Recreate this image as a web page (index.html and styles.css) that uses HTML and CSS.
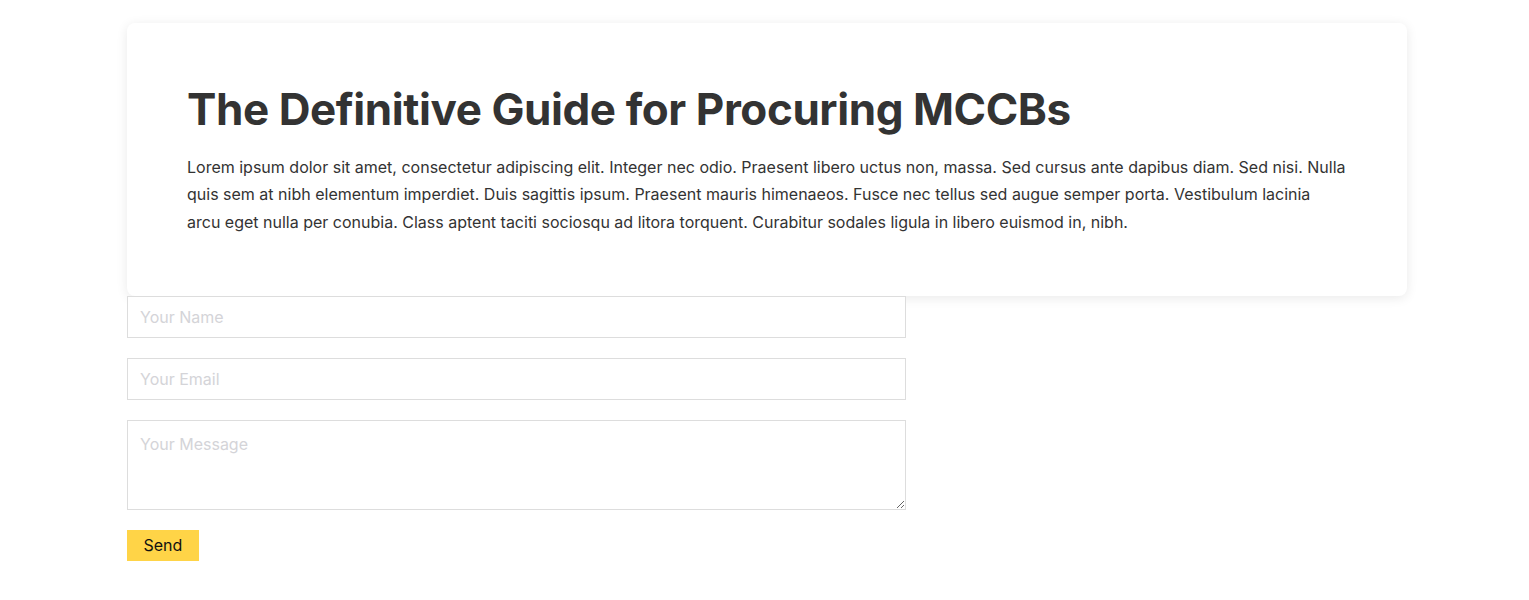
FILE: index.html
```html
<!DOCTYPE html>
<html lang="en">
<head>
<meta charset="utf-8">
<title>The Definitive Guide for Procuring MCCBs</title>
<link rel="stylesheet" href="styles.css">
</head>
<body>
<main class="page">
  <section class="hero-card">
    <h1 class="hero-title">The Definitive Guide for Procuring MCCBs</h1>
    <p class="hero-text">Lorem ipsum dolor sit amet, consectetur adipiscing elit. Integer nec odio. Praesent libero uctus non, massa. Sed cursus ante dapibus diam. Sed nisi. Nulla quis sem at nibh elementum imperdiet. Duis sagittis ipsum. Praesent mauris himenaeos. Fusce nec tellus sed augue semper porta. Vestibulum lacinia arcu eget nulla per conubia. Class aptent taciti sociosqu ad litora torquent. Curabitur sodales ligula in libero euismod in, nibh.</p>
  </section>
  <form class="contact-form">
    <input class="field" type="text" placeholder="Your Name">
    <input class="field" type="email" placeholder="Your Email">
    <textarea class="field field-area" placeholder="Your Message"></textarea>
    <div class="actions"><button class="send-btn" type="button">Send</button></div>
  </form>
</main>
</body>
</html>
```

FILE: styles.css
```css
* { box-sizing: border-box; }
html, body { margin: 0; padding: 0; background: #fff; }
body {
  font-family: Inter, "Noto Sans", Arial, sans-serif;
  color: #333;
}
.page {
  width: 1280px;
  margin: 23px 0 0 127px;
}
.hero-card {
  background: #fff;
  border-radius: 8px;
  box-shadow: 0 2px 12px rgba(0, 0, 0, 0.09);
  padding: 60px 60px 60px;
}
.hero-title {
  margin: 0 0 18px;
  font-size: 44px;
  line-height: 1.2;
  font-weight: 700;
  color: #333;
  letter-spacing: -0.42px;
}
.hero-text {
  margin: 0;
  font-size: 16px;
  line-height: 27.5px;
  color: #333;
}
.contact-form {
  width: 779px;
  display: flex;
  flex-direction: column;
  gap: 20px;
}
.field {
  display: block;
  width: 100%;
  height: 42px;
  border: 1px solid #ddd;
  border-radius: 0;
  padding: 0 12px;
  font-family: Inter, "Noto Sans", Arial, sans-serif;
  font-size: 16px;
  color: #333;
  background: #fff;
  outline: none;
}
.field::placeholder { color: #d4d4d8; }
.field-area {
  height: 90px;
  padding: 13px 12px 12px;
  resize: vertical;
}
.actions { display: flex; }
.send-btn {
  background: #ffd447;
  border: none;
  height: 31px;
  padding: 0 16.5px 1px;
  font-family: Inter, "Noto Sans", Arial, sans-serif;
  font-size: 16px;
  color: #111;
  cursor: pointer;
}
```
